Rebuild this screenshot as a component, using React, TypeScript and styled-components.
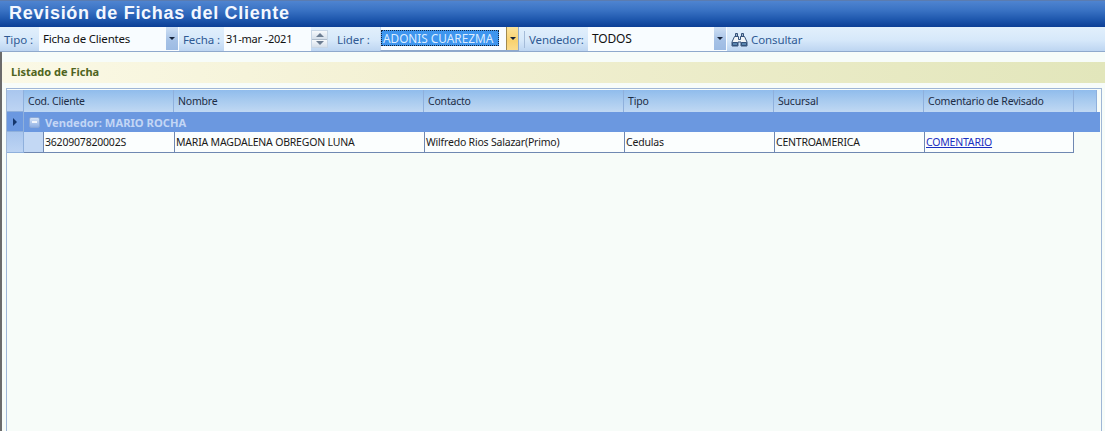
import React from "react";
import styled, { createGlobalStyle } from "styled-components";

const Global = createGlobalStyle`
  html, body { margin: 0; padding: 0; background: #f7fcf9; }
  body { font-family: "Noto Sans", "Liberation Sans", sans-serif; font-size: 10.5px; letter-spacing: -0.2px; color: #101010; }
  #root { width: 1105px; height: 431px; overflow: hidden; }
`;

const Page = styled.div`
  width: 1105px;
  height: 431px;
  display: flex;
  flex-direction: column;
  overflow: hidden;
`;

const TitleBar = styled.header`
  height: 27px;
  flex: none;
  box-sizing: border-box;
  border-top: 1px solid #5b7cb0;
  padding-left: 9px;
  padding-bottom: 1px;
  display: flex;
  align-items: center;
  background: linear-gradient(180deg, #4f84d0 0%, #3a73c4 35%, #1f58ae 70%, #0c3f96 100%);
`;

const Title = styled.h1`
  margin: 0;
  font: bold 18px "Liberation Sans", Arial, sans-serif;
  letter-spacing: 0.72px;
  color: #f4f8ff;
`;

const Toolbar = styled.div`
  height: 25px;
  flex: none;
  box-sizing: border-box;
  border-bottom: 1px solid #8fa9cc;
  display: flex;
  align-items: center;
  background: linear-gradient(180deg, #e2f0fc 0%, #d6e8fa 55%, #bdd5f1 100%);
`;

const Label = styled.span<{ $left: number; $width: number }>`
  margin-left: ${(p) => p.$left}px;
  width: ${(p) => p.$width}px;
  flex: none;
  color: #2f5a94;
  font-size: 11.5px;
  letter-spacing: -0.1px;
  white-space: nowrap;
`;

const Field = styled.div<{ $width: number; $focused?: boolean }>`
  width: ${(p) => p.$width}px;
  height: 24px;
  flex: none;
  box-sizing: border-box;
  display: flex;
  align-items: stretch;
  background: #f8fcff;
  border-right: 1px solid ${(p) => (p.$focused ? "#8fa9cc" : "transparent")};
  border-left: 1px solid ${(p) => (p.$focused ? "#c4d7ee" : "transparent")};
  border-bottom: 1px solid ${(p) => (p.$focused ? "#8fa9cc" : "transparent")};
`;

const FieldText = styled.span<{ $size?: number; $pad?: number }>`
  flex: 1;
  padding-left: ${(p) => p.$pad ?? 3}px;
  display: flex;
  align-items: center;
  font-size: ${(p) => p.$size ?? 11.5}px;
  white-space: nowrap;
  color: #111;
`;

const Selected = styled.span`
  margin: 3px 0 4px 0;
  padding: 0 2px 0 2px;
  width: 118px;
  box-sizing: border-box;
  display: flex;
  align-items: center;
  background: #3e95ee;
  color: #dcecff;
  font-size: 11.8px;
  letter-spacing: 0;
  outline: 1px dotted #10243f;
  outline-offset: -1px;
  white-space: nowrap;
`;

const Arrow = styled.button<{ $active?: boolean }>`
  width: 12px;
  flex: none;
  padding: 0;
  border: 0;
  ${(p) => (p.$active ? "border-left: 1px solid #a08a50;" : "")}
  display: flex;
  align-items: center;
  justify-content: center;
  background: ${(p) =>
    p.$active
      ? "linear-gradient(180deg, #fbe39c, #f9d26f 60%, #fbdc8c)"
      : "linear-gradient(180deg, #cfe0f4, #a5c1e6 60%, #9dbbe3)"};
  &::after {
    content: "";
    width: 0;
    height: 0;
    border-left: 3px solid transparent;
    border-right: 3px solid transparent;
    border-top: 3px solid #15233a;
  }
`;

const Spinner = styled.div`
  width: 17px;
  height: 18px;
  flex: none;
  box-sizing: border-box;
  border: 1px solid #c7d6e6;
  display: flex;
  flex-direction: column;
  background: #e8f0f8;
`;

const SpinPart = styled.span<{ $down?: boolean }>`
  flex: 1;
  display: flex;
  align-items: center;
  justify-content: center;
  background: linear-gradient(180deg, #f6f9fc, #d5dfea);
  ${(p) => (p.$down ? "border-top: 1px solid #aebccc;" : "")}
  &::after {
    content: "";
    width: 0;
    height: 0;
    border-left: 4px solid transparent;
    border-right: 4px solid transparent;
    ${(p) => (p.$down ? "border-top: 4px solid #6c7d92;" : "border-bottom: 4px solid #6c7d92;")}
  }
`;

const Divider = styled.span`
  width: 1px;
  height: 17px;
  margin-left: 5px;
  flex: none;
  background: #a5bcd9;
`;

const QueryButton = styled.button`
  margin-left: 4px;
  padding: 0;
  border: 0;
  background: none;
  display: flex;
  align-items: center;
  gap: 3px;
  font: 11.5px "Noto Sans", "Liberation Sans", sans-serif;
  letter-spacing: -0.1px;
  color: #2f5a94;
`;

const Body = styled.main`
  flex: 1;
  min-height: 0;
  display: flex;
  flex-direction: column;
  padding-top: 10px;
  border-left: 2px solid #6b6b6b;
  background: #f7fcf9;
`;

const SectionBar = styled.div`
  height: 21px;
  flex: none;
  box-sizing: border-box;
  padding: 0 0 2px 9px;
  display: flex;
  align-items: center;
  border-radius: 3px 0 0 3px;
  background: linear-gradient(90deg, #fbf9e6 0%, #f2f0d2 40%, #e2e6bb 100%);
  color: #4f6420;
  font-weight: 700;
  font-size: 11px;
  letter-spacing: 0;
`;

const Grid = styled.section`
  flex: 1;
  min-height: 0;
  margin: 5px 3px 0 4px;
  box-sizing: border-box;
  border: 1px solid #9fb6d6;
  border-bottom: 0;
  padding: 1px 1px 0 0;
`;

const Row = styled.div<{ $height: number }>`
  height: ${(p) => p.$height}px;
  display: flex;
`;

const Indicator = styled.div<{ $flat?: boolean }>`
  width: 17px;
  flex: none;
  box-sizing: border-box;
  border-right: 1px solid #8fb0dc;
  border-bottom: 1px solid #8fb0dc;
  display: flex;
  align-items: center;
  justify-content: center;
  background: ${(p) => (p.$flat ? "#6b98e0" : "linear-gradient(180deg, #a9c6ee, #bdd4f3)")};
`;

const Pointer = styled.span`
  width: 0;
  height: 0;
  border-top: 4px solid transparent;
  border-bottom: 4px solid transparent;
  border-left: 4px solid #14356b;
`;

const HeaderCell = styled.div<{ $width: number }>`
  width: ${(p) => p.$width}px;
  flex: none;
  box-sizing: border-box;
  padding-left: 4px;
  display: flex;
  align-items: center;
  border-right: 1px solid #8fb0dc;
  background: linear-gradient(180deg, #90bcec 0%, #a9cbef 50%, #c0d8f3 100%);
  color: #1c2c44;
  white-space: nowrap;
`;

const GroupRow = styled.div`
  flex: 1;
  display: flex;
  align-items: center;
  gap: 5px;
  padding-left: 5px;
  background: #6b98e0;
  color: #c3d6f5;
  font-weight: 700;
  font-size: 11.2px;
  letter-spacing: 0;
`;

const GroupToggle = styled.span`
  width: 11px;
  height: 11px;
  box-sizing: border-box;
  display: flex;
  align-items: center;
  justify-content: center;
  border-radius: 2px;
  background: linear-gradient(180deg, #d5e3f7, #8fb0e4);
  border: 1px solid #8aa8d8;
  &::after {
    content: "";
    width: 5px;
    height: 2px;
    background: #f2f6fd;
  }
`;

const Indent = styled.div`
  width: 19px;
  flex: none;
  box-sizing: border-box;
  background: #c3d8f4;
  border-bottom: 1px solid #6f88b2;
`;

const DataCell = styled.div<{ $width: number }>`
  width: ${(p) => p.$width}px;
  flex: none;
  box-sizing: border-box;
  padding-left: 1px;
  display: flex;
  align-items: center;
  background: #fbfefe;
  border-left: 1px solid #6f88b2;
  border-bottom: 1px solid #6f88b2;
  white-space: nowrap;
  color: #1a1a1a;
  &:last-child { border-right: 1px solid #6f88b2; }
`;

const Link = styled.a`
  color: #1a2fc0;
  text-decoration: underline;
`;

const Binoculars = () => (
  <svg width="17" height="15" viewBox="0 0 17 15" aria-hidden="true">
    <g stroke="#34527a" strokeWidth="1" strokeLinejoin="round">
      <path d="M4.5 1.5h2v3h-2zM10.5 1.5h2v3h-2z" fill="#9fb4cc" />
      <path d="M3.5 4.5h4v3h2v-3h4l2.5 5.5v4h-6v-4h-3v4h-6v-4z" fill="#f2f5f7" />
      <path d="M1.5 10.5h5v3h-5zM10.5 10.5h5v3h-5z" fill="#5a86b0" />
    </g>
  </svg>
);

const columns = [
  { title: "Cod. Cliente", width: 150 },
  { title: "Nombre", width: 250 },
  { title: "Contacto", width: 200 },
  { title: "Tipo", width: 150 },
  { title: "Sucursal", width: 150 },
  { title: "Comentario de Revisado", width: 150 },
];

const dataCells = [
  { text: "3620907820002S", width: 131 },
  { text: "MARIA MAGDALENA OBREGON LUNA", width: 250 },
  { text: "Wilfredo Rios Salazar(Primo)", width: 200 },
  { text: "Cedulas", width: 150 },
  { text: "CENTROAMERICA", width: 150 },
];

export default function App() {
  return (
    <Page>
      <Global />
      <TitleBar>
        <Title>Revisión de Fichas del Cliente</Title>
      </TitleBar>
      <Toolbar>
        <Label $left={4} $width={35}>Tipo :</Label>
        <Field $width={140}>
          <FieldText>Ficha de Clientes</FieldText>
          <Arrow />
        </Field>
        <Label $left={4} $width={41}>Fecha :</Label>
        <Field $width={87}>
          <FieldText $pad={1} $size={11}>31-mar -2021</FieldText>
        </Field>
        <Spinner>
          <SpinPart />
          <SpinPart $down />
        </Spinner>
        <Label $left={9} $width={43}>Lider :</Label>
        <Field $width={139} $focused>
          <Selected>ADONIS CUAREZMA</Selected>
          <FieldText />
          <Arrow $active />
        </Field>
        <Divider />
        <Label $left={4} $width={59}>Vendedor:</Label>
        <Field $width={139}>
          <FieldText $size={12}>TODOS</FieldText>
          <Arrow />
        </Field>
        <QueryButton>
          <Binoculars />
          Consultar
        </QueryButton>
      </Toolbar>
      <Body>
        <SectionBar>Listado de Ficha</SectionBar>
        <Grid>
          <Row $height={22}>
            <Indicator />
            {columns.map((c) => (
              <HeaderCell key={c.title} $width={c.width}>{c.title}</HeaderCell>
            ))}
            <HeaderCell $width={23} />
          </Row>
          <Row $height={20}>
            <Indicator $flat>
              <Pointer />
            </Indicator>
            <GroupRow>
              <GroupToggle />
              Vendedor: MARIO ROCHA
            </GroupRow>
          </Row>
          <Row $height={21}>
            <Indicator />
            <Indent />
            {dataCells.map((c) => (
              <DataCell key={c.text} $width={c.width}>{c.text}</DataCell>
            ))}
            <DataCell $width={150}>
              <Link href="#">COMENTARIO</Link>
            </DataCell>
          </Row>
        </Grid>
      </Body>
    </Page>
  );
}
